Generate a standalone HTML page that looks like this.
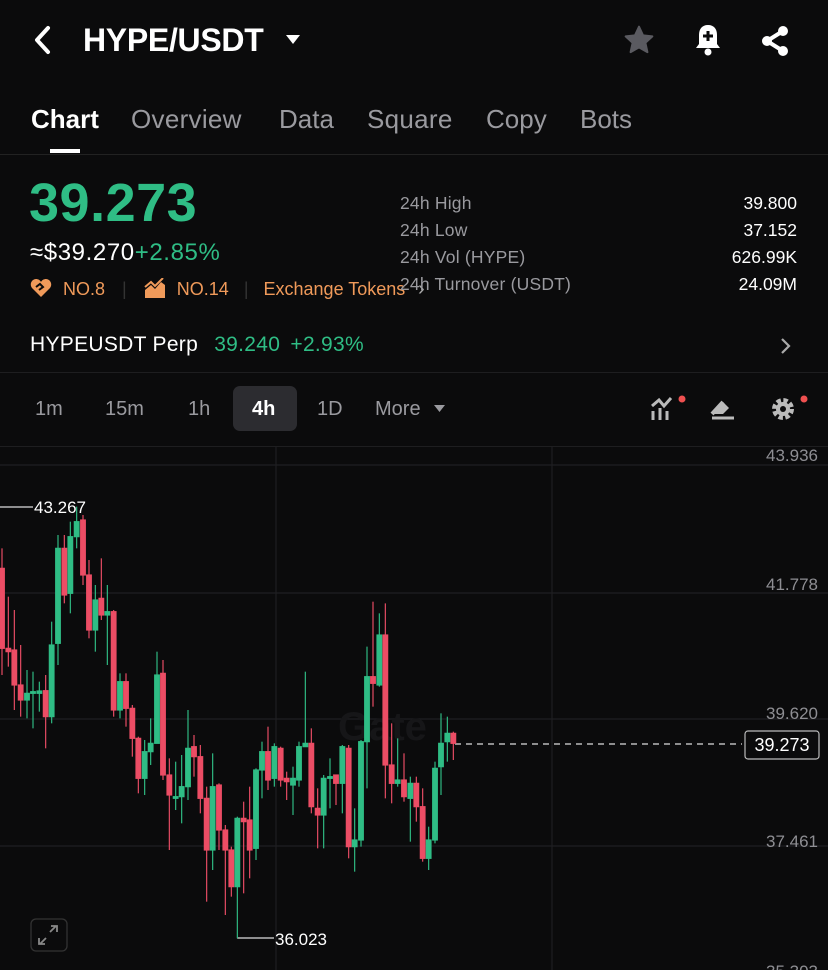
<!DOCTYPE html>
<html><head><meta charset="utf-8"><style>
*{margin:0;padding:0;box-sizing:border-box}
body{width:828px;height:970px;background:#0b0b0c;color:#fff;font-family:"Liberation Sans",sans-serif;position:relative;overflow:hidden}
.a{position:absolute;white-space:nowrap}
.gray{color:#9a9a9f}
.g{fill:#2fbd85;stroke:#2fbd85}
.r{fill:#ec4d65;stroke:#ec4d65}
</style></head><body>
<svg class="a" style="left:30px;top:24px" width="24" height="32" viewBox="0 0 24 32"><path d="M18 4 L7 16 L18 28" stroke="#fff" stroke-width="4" fill="none" stroke-linecap="round" stroke-linejoin="round"/></svg>
<div class="a" style="left:83px;top:22px;font-size:32px;font-weight:bold;letter-spacing:-0.3px">HYPE/USDT</div>
<svg class="a" style="left:286px;top:35px" width="14" height="10"><path d="M0 0H14L7 9Z" fill="#fff"/></svg>
<svg class="a" style="left:622px;top:24px" width="34" height="32" viewBox="0 0 24 24"><path d="M12 2l3 6.5 7 .8-5.2 4.8 1.5 7-6.3-3.6-6.3 3.6 1.5-7L2 9.3l7-.8z" fill="#5a5a60" stroke="#5a5a60" stroke-linejoin="round" stroke-width="1.5"/></svg>
<svg class="a" style="left:692px;top:22px" width="32" height="36" viewBox="0 0 32 36"><path d="M16 3c-6 0-9 4-9 10v9l-3 4h24l-3-4v-9c0-6-3-10-9-10z" fill="#fff"/><circle cx="16" cy="30" r="3.5" fill="#fff"/><path d="M16 9v10M11 14h10" stroke="#0b0b0c" stroke-width="3"/></svg>
<svg class="a" style="left:758px;top:24px" width="34" height="34" viewBox="0 0 34 34"><path d="M25 7L9 17l16 10" stroke="#fff" stroke-width="4" fill="none"/><circle cx="25" cy="7" r="5" fill="#fff"/><circle cx="9" cy="17" r="5" fill="#fff"/><circle cx="25" cy="27" r="5" fill="#fff"/></svg>

<div class="a" style="left:31px;top:104px;font-size:26px;font-weight:bold">Chart</div>
<div class="a gray" style="left:131px;top:104px;font-size:26px;letter-spacing:0.3px">Overview</div>
<div class="a gray" style="left:279px;top:104px;font-size:26px">Data</div>
<div class="a gray" style="left:367px;top:104px;font-size:26px;letter-spacing:0.3px">Square</div>
<div class="a gray" style="left:486px;top:104px;font-size:26px">Copy</div>
<div class="a gray" style="left:580px;top:104px;font-size:26px">Bots</div>
<div class="a" style="left:50px;top:149px;width:30px;height:4px;background:#fff"></div>
<div class="a" style="left:0;top:154px;width:828px;height:1px;background:#222"></div>

<div class="a" style="left:29px;top:172px;font-size:54px;font-weight:bold;color:#2fbd85;letter-spacing:0.5px">39.273</div>
<div class="a" style="left:30px;top:239px;font-size:24px;letter-spacing:0.6px">≈$39.270<span style="color:#2fbd85">+2.85%</span></div>
<div class="a" style="left:30px;top:278px;font-size:18px;color:#f09a5a">
<svg width="22" height="20" viewBox="0 0 22 20" style="vertical-align:-3px"><path d="M11 19L2 10C-1 6 2 1 6 1c2 0 4 1 5 3 1-2 3-3 5-3 4 0 7 5 4 9z" fill="#f09a5a"/><path d="M6 9l4-3 3 3-4 3" stroke="#0b0b0c" stroke-width="2" fill="none"/></svg>
<span style="margin-left:6px">NO.8</span>
<span style="color:#333;margin:0 12px">|</span>
<svg width="22" height="20" viewBox="0 0 22 20" style="vertical-align:-3px"><path d="M1 20V12l6-5 4 4 6-7 4 3v13z" fill="#f09a5a"/><path d="M1 9l6-5 4 4 8-8" stroke="#f09a5a" stroke-width="2" fill="none"/></svg>
<span style="margin-left:6px">NO.14</span>
<span style="color:#333;margin:0 10px">|</span>
<span>Exchange Tokens</span></div>
<div class="a" style="left:418px;top:278px;font-size:20px;color:#aaa">›</div>

<div class="a gray" style="left:400px;top:190px;font-size:17.5px;line-height:27px;letter-spacing:0.2px">24h High<br>24h Low<br>24h Vol (HYPE)<br>24h Turnover (USDT)</div>
<div class="a" style="right:31px;top:190px;font-size:17.5px;line-height:27px;text-align:right">39.800<br>37.152<br>626.99K<br>24.09M</div>

<div class="a" style="left:30px;top:333px;font-size:21px;letter-spacing:0.3px">HYPEUSDT Perp <span style="color:#2fbd85;margin-left:10px">39.240</span> <span style="color:#2fbd85;margin-left:4px">+2.93%</span></div>
<svg class="a" style="left:778px;top:336px" width="14" height="20"><path d="M4 3l7 7-7 7" stroke="#aaa" stroke-width="2.2" fill="none"/></svg>
<div class="a" style="left:0;top:372px;width:828px;height:1px;background:#1e1e20"></div>

<div class="a" style="left:233px;top:386px;width:64px;height:45px;background:#2c2c30;border-radius:7px"></div>
<div class="a gray" style="left:35px;top:398px;font-size:20px">1m</div>
<div class="a gray" style="left:105px;top:398px;font-size:20px">15m</div>
<div class="a gray" style="left:188px;top:398px;font-size:20px">1h</div>
<div class="a" style="left:252px;top:398px;font-size:20px;font-weight:bold">4h</div>
<div class="a gray" style="left:317px;top:398px;font-size:20px">1D</div>
<div class="a gray" style="left:375px;top:398px;font-size:20px">More</div>
<svg class="a" style="left:434px;top:405px" width="11" height="8"><path d="M0 0H11L5.5 7Z" fill="#9a9a9f"/></svg>
<svg class="a" style="left:648px;top:394px" width="40" height="30"><path d="M4 12l7-6 5 6 7-8" stroke="#bbb" stroke-width="3" fill="none"/><path d="M5 17v9M12 14v12M19 17v9" stroke="#bbb" stroke-width="3"/><circle cx="34" cy="5" r="3.5" fill="#ef5050"/></svg>
<svg class="a" style="left:708px;top:396px" width="30" height="26"><path d="M4 18L15 6l6 6-6 6" fill="#bbb"/><path d="M4 22h22" stroke="#bbb" stroke-width="3"/><path d="M4 18l11-12" stroke="#bbb" stroke-width="4"/></svg>
<svg class="a" style="left:768px;top:392px" width="42" height="34" viewBox="0 0 42 34"><circle cx="15" cy="17" r="8" fill="none" stroke="#bbb" stroke-width="6" stroke-dasharray="4 2.3"/><circle cx="15" cy="17" r="7" fill="#bbb"/><circle cx="15" cy="17" r="3" fill="#0b0b0c"/><circle cx="36" cy="7" r="3.5" fill="#ef5050"/></svg>

<div class="a" style="left:0;top:446px;width:828px;height:1px;background:#1e1e20"></div>
<svg class="a" style="left:0;top:447px" width="828" height="523">
<g stroke="#1f1f22" stroke-width="1.2">
<line x1="0" y1="18" x2="828" y2="18"/><line x1="0" y1="146" x2="828" y2="146"/><line x1="0" y1="272" x2="828" y2="272"/><line x1="0" y1="399" x2="828" y2="399"/>
<line x1="276" y1="0" x2="276" y2="523"/><line x1="552" y1="0" x2="552" y2="523"/>
</g>
<g fill="#8e8e93" font-size="17" font-family="Liberation Sans" text-anchor="end">
<text x="818" y="14">43.936</text><text x="818" y="143">41.778</text><text x="818" y="272">39.620</text><text x="818" y="400">37.461</text><text x="818" y="530">35.303</text>
</g>
<text x="338" y="293" font-size="40" font-weight="bold" fill="#161618" font-family="Liberation Sans">Gate</text>
<line x1="455" y1="297" x2="742" y2="297" stroke="#ddd" stroke-width="1.3" stroke-dasharray="6 5"/>
<rect x="745" y="284" width="74" height="28" rx="3" fill="#0b0b0c" stroke="#bbb" stroke-width="1.2"/>
<text x="782" y="304" font-size="18" fill="#fff" text-anchor="middle" font-family="Liberation Sans">39.273</text>
<line x1="0" y1="60" x2="33" y2="60" stroke="#ddd" stroke-width="1.2"/>
<text x="34" y="66" font-size="17" fill="#fff" font-family="Liberation Sans">43.267</text>
<line x1="237" y1="491" x2="274" y2="491" stroke="#ddd" stroke-width="1.2"/>
<text x="275" y="498" font-size="17" fill="#fff" font-family="Liberation Sans">36.023</text>
<rect x="31" y="472" width="36" height="32" rx="5" fill="none" stroke="#333" stroke-width="1.3"/>
<path d="M40 497l6-6M39 491v6h6M56 479l-6 6M57 485v-6h-6" stroke="#888" stroke-width="1.8" fill="none"/>
</svg>
<svg class="a" style="left:0;top:480px" width="480" height="460" viewBox="0 0 1440 1380" stroke-width="3.5">
<g class="r"><line x1="6" y1="205" x2="6" y2="585"/><rect x="-1" y="265" width="14" height="240"/></g>
<g class="r"><line x1="25" y1="350" x2="25" y2="560"/><rect x="18" y="505" width="14" height="10"/></g>
<g class="r"><line x1="43" y1="390" x2="43" y2="690"/><rect x="36" y="510" width="14" height="105"/></g>
<g class="r"><line x1="62" y1="495" x2="62" y2="710"/><rect x="55" y="615" width="14" height="45"/></g>
<g class="g"><line x1="81" y1="570" x2="81" y2="715"/><rect x="74" y="640" width="14" height="20"/></g>
<g class="g"><line x1="99" y1="575" x2="99" y2="745"/><rect x="92" y="635" width="14" height="5"/></g>
<g class="g"><line x1="118" y1="605" x2="118" y2="695"/><rect x="111" y="633" width="14" height="7"/></g>
<g class="r"><line x1="137" y1="585" x2="137" y2="805"/><rect x="130" y="632" width="14" height="78"/></g>
<g class="g"><line x1="155" y1="425" x2="155" y2="730"/><rect x="148" y="495" width="14" height="215"/></g>
<g class="g"><line x1="174" y1="165" x2="174" y2="555"/><rect x="167" y="205" width="14" height="285"/></g>
<g class="r"><line x1="193" y1="165" x2="193" y2="370"/><rect x="186" y="205" width="14" height="140"/></g>
<g class="g"><line x1="211" y1="125" x2="211" y2="400"/><rect x="204" y="170" width="14" height="170"/></g>
<g class="g"><line x1="230" y1="80" x2="230" y2="205"/><rect x="223" y="125" width="14" height="45"/></g>
<g class="r"><line x1="249" y1="105" x2="249" y2="315"/><rect x="242" y="120" width="14" height="165"/></g>
<g class="r"><line x1="267" y1="240" x2="267" y2="475"/><rect x="260" y="285" width="14" height="165"/></g>
<g class="g"><line x1="286" y1="315" x2="286" y2="515"/><rect x="279" y="360" width="14" height="90"/></g>
<g class="r"><line x1="304" y1="235" x2="304" y2="420"/><rect x="297" y="355" width="14" height="50"/></g>
<g class="g"><line x1="322" y1="315" x2="322" y2="555"/><rect x="315" y="395" width="14" height="10"/></g>
<g class="r"><line x1="341" y1="390" x2="341" y2="710"/><rect x="334" y="395" width="14" height="295"/></g>
<g class="g"><line x1="360" y1="580" x2="360" y2="715"/><rect x="353" y="605" width="14" height="85"/></g>
<g class="r"><line x1="378" y1="580" x2="378" y2="740"/><rect x="371" y="605" width="14" height="80"/></g>
<g class="r"><line x1="397" y1="675" x2="397" y2="830"/><rect x="390" y="685" width="14" height="90"/></g>
<g class="r"><line x1="415" y1="770" x2="415" y2="940"/><rect x="408" y="775" width="14" height="120"/></g>
<g class="g"><line x1="434" y1="780" x2="434" y2="945"/><rect x="427" y="815" width="14" height="80"/></g>
<g class="g"><line x1="452" y1="715" x2="452" y2="855"/><rect x="445" y="790" width="14" height="25"/></g>
<g class="g"><line x1="471" y1="515" x2="471" y2="790"/><rect x="464" y="585" width="14" height="205"/></g>
<g class="r"><line x1="489" y1="540" x2="489" y2="900"/><rect x="482" y="580" width="14" height="305"/></g>
<g class="r"><line x1="508" y1="835" x2="508" y2="1110"/><rect x="501" y="885" width="14" height="60"/></g>
<g class="g"><line x1="527" y1="845" x2="527" y2="990"/><rect x="520" y="950" width="14" height="5"/></g>
<g class="g"><line x1="545" y1="825" x2="545" y2="1030"/><rect x="538" y="920" width="14" height="30"/></g>
<g class="g"><line x1="564" y1="690" x2="564" y2="960"/><rect x="557" y="805" width="14" height="115"/></g>
<g class="r"><line x1="582" y1="765" x2="582" y2="890"/><rect x="575" y="800" width="14" height="30"/></g>
<g class="r"><line x1="601" y1="795" x2="601" y2="1000"/><rect x="594" y="830" width="14" height="125"/></g>
<g class="r"><line x1="620" y1="920" x2="620" y2="1265"/><rect x="613" y="955" width="14" height="155"/></g>
<g class="g"><line x1="638" y1="820" x2="638" y2="1170"/><rect x="631" y="920" width="14" height="190"/></g>
<g class="r"><line x1="657" y1="910" x2="657" y2="1110"/><rect x="650" y="915" width="14" height="135"/></g>
<g class="r"><line x1="676" y1="1035" x2="676" y2="1305"/><rect x="669" y="1050" width="14" height="60"/></g>
<g class="r"><line x1="694" y1="1100" x2="694" y2="1250"/><rect x="687" y="1110" width="14" height="110"/></g>
<g class="g"><line x1="712" y1="1010" x2="712" y2="1375"/><rect x="705" y="1015" width="14" height="205"/></g>
<g class="r"><line x1="731" y1="965" x2="731" y2="1240"/><rect x="724" y="1015" width="14" height="10"/></g>
<g class="r"><line x1="749" y1="920" x2="749" y2="1195"/><rect x="742" y="1020" width="14" height="90"/></g>
<g class="g"><line x1="768" y1="865" x2="768" y2="1140"/><rect x="761" y="870" width="14" height="235"/></g>
<g class="g"><line x1="786" y1="785" x2="786" y2="955"/><rect x="779" y="815" width="14" height="55"/></g>
<g class="r"><line x1="804" y1="740" x2="804" y2="930"/><rect x="797" y="815" width="14" height="85"/></g>
<g class="g"><line x1="823" y1="790" x2="823" y2="920"/><rect x="816" y="800" width="14" height="95"/></g>
<g class="r"><line x1="842" y1="800" x2="842" y2="920"/><rect x="835" y="805" width="14" height="95"/></g>
<g class="r"><line x1="860" y1="875" x2="860" y2="960"/><rect x="853" y="895" width="14" height="10"/></g>
<g class="g"><line x1="879" y1="860" x2="879" y2="1005"/><rect x="872" y="895" width="14" height="20"/></g>
<g class="g"><line x1="897" y1="785" x2="897" y2="920"/><rect x="890" y="800" width="14" height="100"/></g>
<g class="g"><line x1="916" y1="575" x2="916" y2="800"/><rect x="909" y="790" width="14" height="10"/></g>
<g class="r"><line x1="934" y1="745" x2="934" y2="1000"/><rect x="927" y="790" width="14" height="190"/></g>
<g class="r"><line x1="953" y1="925" x2="953" y2="1105"/><rect x="946" y="985" width="14" height="20"/></g>
<g class="g"><line x1="971" y1="885" x2="971" y2="1105"/><rect x="964" y="895" width="14" height="110"/></g>
<g class="g"><line x1="990" y1="835" x2="990" y2="985"/><rect x="983" y="890" width="14" height="5"/></g>
<g class="r"><line x1="1008" y1="885" x2="1008" y2="975"/><rect x="1001" y="885" width="14" height="25"/></g>
<g class="g"><line x1="1027" y1="795" x2="1027" y2="1000"/><rect x="1020" y="800" width="14" height="110"/></g>
<g class="r"><line x1="1046" y1="795" x2="1046" y2="1135"/><rect x="1039" y="805" width="14" height="295"/></g>
<g class="g"><line x1="1064" y1="985" x2="1064" y2="1175"/><rect x="1057" y="1080" width="14" height="20"/></g>
<g class="g"><line x1="1083" y1="780" x2="1083" y2="1100"/><rect x="1076" y="785" width="14" height="295"/></g>
<g class="g"><line x1="1101" y1="500" x2="1101" y2="925"/><rect x="1094" y="590" width="14" height="195"/></g>
<g class="r"><line x1="1119" y1="365" x2="1119" y2="680"/><rect x="1112" y="590" width="14" height="20"/></g>
<g class="g"><line x1="1138" y1="400" x2="1138" y2="620"/><rect x="1131" y="465" width="14" height="150"/></g>
<g class="r"><line x1="1156" y1="370" x2="1156" y2="955"/><rect x="1149" y="465" width="14" height="390"/></g>
<g class="r"><line x1="1175" y1="730" x2="1175" y2="970"/><rect x="1168" y="855" width="14" height="55"/></g>
<g class="g"><line x1="1193" y1="775" x2="1193" y2="920"/><rect x="1186" y="900" width="14" height="10"/></g>
<g class="r"><line x1="1212" y1="820" x2="1212" y2="965"/><rect x="1205" y="900" width="14" height="50"/></g>
<g class="g"><line x1="1231" y1="890" x2="1231" y2="1085"/><rect x="1224" y="910" width="14" height="45"/></g>
<g class="r"><line x1="1249" y1="890" x2="1249" y2="1025"/><rect x="1242" y="910" width="14" height="70"/></g>
<g class="r"><line x1="1268" y1="925" x2="1268" y2="1145"/><rect x="1261" y="980" width="14" height="155"/></g>
<g class="g"><line x1="1286" y1="1040" x2="1286" y2="1170"/><rect x="1279" y="1080" width="14" height="55"/></g>
<g class="g"><line x1="1305" y1="845" x2="1305" y2="1090"/><rect x="1298" y="865" width="14" height="215"/></g>
<g class="g"><line x1="1323" y1="700" x2="1323" y2="945"/><rect x="1316" y="790" width="14" height="70"/></g>
<g class="g"><line x1="1342" y1="710" x2="1342" y2="845"/><rect x="1335" y="760" width="14" height="25"/></g>
<g class="r"><line x1="1360" y1="755" x2="1360" y2="840"/><rect x="1353" y="760" width="14" height="30"/></g>
</svg>
</body></html>
